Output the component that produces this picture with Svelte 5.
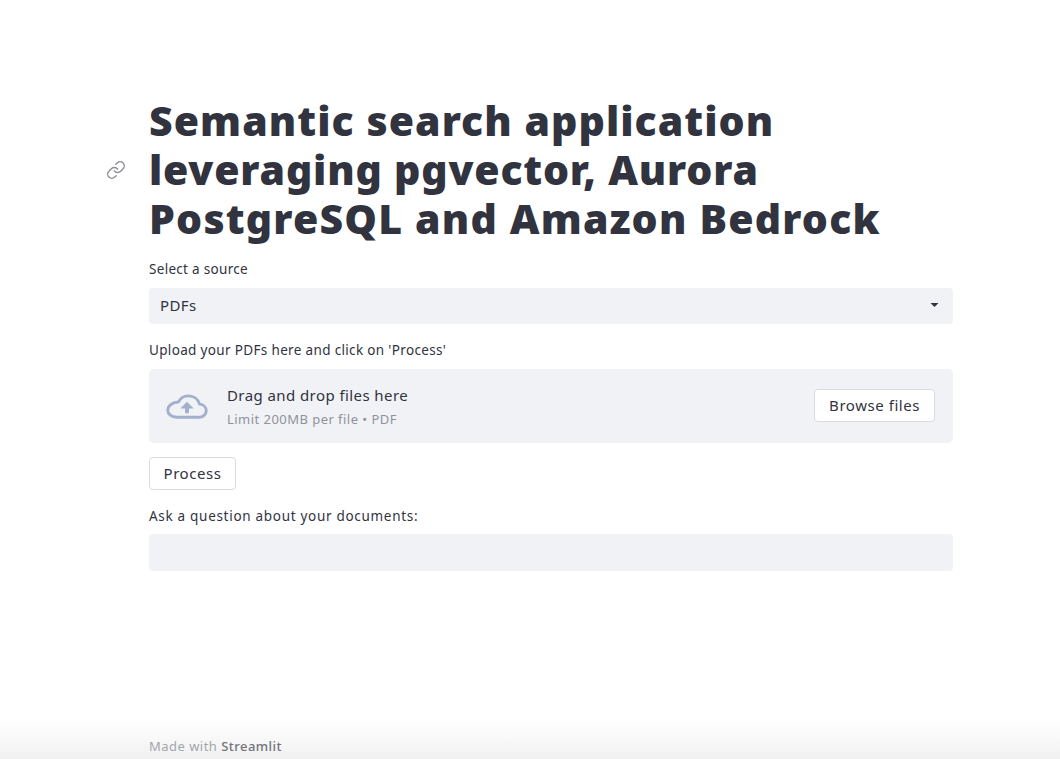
<script>
  const lines = ["Semantic search application", "leveraging pgvector, Aurora", "PostgreSQL and Amazon Bedrock"];
</script>

<div class="page">
  <main class="column">
    <div class="title-wrap">
      <a class="anchor" href="#top" aria-label="Link to heading">
        <svg width="20" height="20" viewBox="0 0 24 24" fill="none" stroke="#8c8f96" stroke-width="1.7" stroke-linecap="round" stroke-linejoin="round">
          <path d="M10 13a5 5 0 0 0 7.54.54l3-3a5 5 0 0 0-7.07-7.07l-1.72 1.71"></path>
          <path d="M14 11a5 5 0 0 0-7.54-.54l-3 3a5 5 0 0 0 7.07 7.07l1.71-1.71"></path>
        </svg>
      </a>
      <h1>{#each lines as line}<span class="line">{line}</span>{/each}</h1>
    </div>

    <div class="label first">Select a source</div>
    <div class="select">
      <span>PDFs</span>
      <svg class="caret" width="9" height="4" viewBox="0 0 10 5"><path d="M0 0h10L5 5z" fill="#31333f"></path></svg>
    </div>

    <div class="label second">Upload your PDFs here and click on 'Process'</div>
    <div class="uploader">
      <svg class="cloud" width="44" height="25" viewBox="0 0 44 26" fill="none">
        <path d="M11 24.2h23.5c4.3 0 7.5-3 7.5-6.8 0-3.7-3-6.6-6.9-6.9C33.6 5.400 29 2 23.500 2c-4.500 0-8.500 2.500-10.300 6.300C7 8.400 2 12.300 2 16.800c0 4.200 4 7.400 9 7.400z" stroke="#a3b0cb" stroke-width="3" stroke-linejoin="round"></path>
        <path d="M22 8l7 7h-5v5h-4v-5h-5z" fill="#a3b0cb"></path>
      </svg>
      <div class="drop-text">
        <div class="drop-title">Drag and drop files here</div>
        <div class="drop-sub">Limit 200MB per file • PDF</div>
      </div>
      <button class="btn browse">Browse files</button>
    </div>

    <button class="btn process">Process</button>

    <div class="label third">Ask a question about your documents:</div>
    <div class="textinput"></div>
  </main>

  <footer class="footer"><span>Made with <b>Streamlit</b></span></footer>
</div>

<style>
  :global(body) {
    margin: 0;
    background: #fff;
  }
  .page {
    height: 759px;
    display: flex;
    flex-direction: column;
    overflow: hidden;
    font-family: "Noto Sans", "Open Sans", sans-serif;
    color: #31333f;
  }
  .column {
    width: 804px;
    margin-left: 149px;
    padding-top: 96px;
    display: flex;
    flex-direction: column;
    align-items: flex-start;
  }
  .title-wrap {
    position: relative;
    width: 100%;
  }
  .anchor {
    position: absolute;
    left: -43px;
    top: 64px;
    display: block;
    line-height: 0;
  }
  h1 {
    margin: 0;
    font-size: 41px;
    line-height: 49px;
    font-weight: 900;
    letter-spacing: 1.05px;
    color: #31333f;
  }
  .line {
    display: block;
    white-space: nowrap;
  }
  .line:nth-child(2) { letter-spacing: 0.8px; }
  .line:nth-child(3) { letter-spacing: 1.18px; }
  .label {
    font-size: 13.5px;
    line-height: 18px;
    color: #31333f;
  }
  .first { margin-top: 17px; letter-spacing: 0.3px; }
  .second { margin-top: 17px; letter-spacing: 0.34px; }
  .third { margin-top: 17px; letter-spacing: 0.7px; }
  .select {
    box-sizing: border-box;
    width: 100%;
    height: 36px;
    margin-top: 10px;
    padding: 0 14px 2px 11px;
    background: #f0f2f6;
    border-radius: 4px;
    display: flex;
    align-items: center;
    justify-content: space-between;
    font-size: 15px;
    letter-spacing: 0.4px;
  }
  .uploader {
    box-sizing: border-box;
    width: 100%;
    height: 74px;
    margin-top: 10px;
    padding: 0 18px 0 16px;
    background: #f0f2f6;
    border-radius: 5px;
    display: flex;
    align-items: center;
  }
  .cloud {
    flex: none;
    margin-right: 18px;
  }
  .drop-text {
    flex: 1;
  }
  .drop-title {
    font-size: 15px;
    line-height: 20px;
    letter-spacing: 0.42px;
  }
  .drop-sub {
    margin-top: 5px;
    font-size: 13px;
    line-height: 18px;
    letter-spacing: 0.46px;
    color: #8f929a;
  }
  .btn {
    box-sizing: border-box;
    height: 33px;
    background: #fff;
    border: 1px solid #d9dbe0;
    border-radius: 4px;
    font: inherit;
    font-size: 15px;
    letter-spacing: 0.55px;
    color: #31333f;
    padding: 0 14px;
  }
  .browse {
    margin-bottom: 2px;
  }
  .process {
    margin-top: 14px;
    padding: 0 13.5px 2px;
  }
  .textinput {
    width: 100%;
    height: 37px;
    margin-top: 9px;
    background: #f0f2f6;
    border-radius: 4px;
  }
  .footer {
    margin-top: auto;
    height: 40px;
    padding-left: 149px;
    display: flex;
    align-items: flex-end;
    background: linear-gradient(to bottom, #ffffff, #f1f1f1);
    font-size: 13px;
    line-height: 24px;
    letter-spacing: 0.47px;
    color: #a3a5ab;
  }
  .footer span { margin-bottom: 1px; }
  .footer b {
    font-weight: 500;
    color: #72747c;
  }
</style>
